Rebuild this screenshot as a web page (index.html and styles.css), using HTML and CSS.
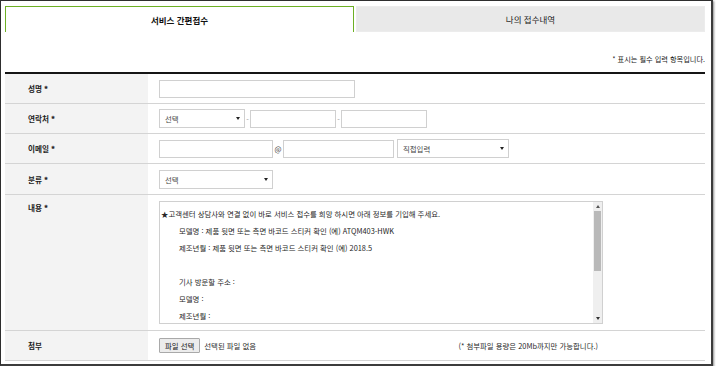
FILE: index.html
```html
<!DOCTYPE html>
<html lang="ko">
<head>
    <meta charset="UTF-8">
    <meta name="viewport" content="width=device-width, initial-scale=1.0">
    <title>서비스 간편접수</title>
    <link rel="stylesheet" href="styles.css">
</head>
<body>
    <div class="frame">
        <div class="wrap">
            <div class="tabs">
                <div class="tab active">서비스 간편접수</div>
                <div class="tab">나의 접수내역</div>
            </div>

            <p class="note">* 표시는 필수 입력 항목입니다.</p>

            <div class="form">
                <div class="row">
                    <div class="label">성명 <b>*</b></div>
                    <div class="field">
                        <input class="input w-name" type="text">
                    </div>
                </div>

                <div class="row">
                    <div class="label">연락처 <b>*</b></div>
                    <div class="field">
                        <div class="select w-tel">선택<span class="arrow"></span></div>
                        <span class="sep">-</span>
                        <input class="input w-tel" type="text">
                        <span class="sep">-</span>
                        <input class="input w-tel" type="text">
                    </div>
                </div>

                <div class="row">
                    <div class="label">이메일 <b>*</b></div>
                    <div class="field">
                        <input class="input w-mail" type="text">
                        <span class="at">@</span>
                        <input class="input w-domain" type="text">
                        <div class="select w-direct">직접입력<span class="arrow"></span></div>
                    </div>
                </div>

                <div class="row">
                    <div class="label">분류 <b>*</b></div>
                    <div class="field">
                        <div class="select w-mail">선택<span class="arrow"></span></div>
                    </div>
                </div>

                <div class="row tall">
                    <div class="label">내용 <b>*</b></div>
                    <div class="field">
                        <div class="memo">
                            <div class="memo-text">
                                <div>★고객센터 상담사와 연결 없이 바로 서비스 접수를 희망 하시면 아래 정보를 기입해 주세요.</div>
                                <div class="indent">모델명 : 제품 뒷면 또는 측면 바코드 스티커 확인 (예) ATQM403-HWK</div>
                                <div class="indent">제조년월 : 제품 뒷면 또는 측면 바코드 스티커 확인 (예) 2018.5</div>
                                <div class="indent">&nbsp;</div>
                                <div class="indent">기사 방문할 주소 :</div>
                                <div class="indent">모델명 :</div>
                                <div class="indent">제조년월 :</div>
                            </div>
                            <div class="scrollbar">
                                <span class="scroll-up"></span>
                                <span class="thumb"></span>
                                <span class="track"></span>
                                <span class="scroll-down"></span>
                            </div>
                        </div>
                    </div>
                </div>

                <div class="row">
                    <div class="label">첨부</div>
                    <div class="field">
                        <button class="file-btn" type="button">파일 선택</button>
                        <span class="file-name">선택된 파일 없음</span>
                        <span class="attach-tip">(* 첨부파일 용량은 20Mb까지만 가능합니다.)</span>
                    </div>
                </div>
            </div>
        </div>
    </div>
</body>
</html>
```

FILE: styles.css
```css
body {
    margin: 0;
    padding: 0;
    background: #ffffff;
    font-family: "Noto Sans CJK KR", "Noto Sans", sans-serif;
    font-size: 7.4px;
    color: #2a2a2a;
}

.frame {
    width: 710px;
    height: 363px;
    border-top: 1px solid #2e2e2e;
    border-left: 1px solid #2e2e2e;
    border-right: 2px solid #3c3c3c;
    border-bottom: 2px solid #3c3c3c;
    box-shadow: 1px 1px 2px rgba(0, 0, 0, 0.45);
}

.wrap {
    width: 700px;
    padding: 5px 6px 0 4px;
}

/* tabs */
.tabs {
    display: flex;
    gap: 2px;
    height: 26px;
}

.tab {
    flex: 1;
    display: flex;
    align-items: center;
    justify-content: center;
    font-size: 8.5px;
    color: #222222;
    background: #e9e9e9;
    border: 1px solid #ececec;
    box-sizing: border-box;
}

.tab.active {
    background: #ffffff;
    font-weight: bold;
    color: #111111;
    border: 1px solid #6db024;
    border-bottom: none;
}

.note {
    margin: 0;
    height: 40px;
    padding-top: 20px;
    box-sizing: border-box;
    text-align: right;
    font-size: 7.2px;
    line-height: 14px;
    color: #222222;
}

/* form rows */
.form {
    border-top: 2px solid #151515;
}

.row {
    display: grid;
    grid-template-columns: 143px 1fr;
    height: 29px;
    border-bottom: 1px solid #d4d4d4;
}

.row:nth-child(4) {
    height: 30px;
}

.row.tall {
    height: 135px;
}

.label {
    background: #f3f3f3;
    padding-left: 23px;
    display: flex;
    align-items: center;
    font-weight: bold;
    color: #222222;
    font-size: 7.6px;
}

.label b {
    margin-left: 2px;
}

.row.tall .label {
    align-items: flex-start;
    padding-top: 6px;
    line-height: 14px;
}

.field {
    display: flex;
    align-items: center;
    padding-left: 11px;
}

.input {
    height: 18px;
    margin: 0;
    padding: 0;
    border: 1px solid #d0d0d0;
    box-sizing: border-box;
    background: #ffffff;
}

.select {
    position: relative;
    height: 19px;
    border: 1px solid #d0d0d0;
    box-sizing: border-box;
    background: #ffffff;
    display: flex;
    align-items: center;
    padding-left: 5px;
    color: #444444;
}

.arrow {
    position: absolute;
    right: 4px;
    top: 7px;
    width: 0;
    height: 0;
    border-left: 2px solid transparent;
    border-right: 2px solid transparent;
    border-top: 3px solid #222222;
}

.w-name { width: 196px; }
.w-tel { width: 86px; }
.w-mail { width: 114px; }
.w-domain { width: 111px; }
.w-direct { width: 112px; margin-left: 3px; }

.sep {
    width: 5px;
    text-align: center;
    color: #999999;
}

.at {
    width: 10px;
    text-align: center;
    color: #444444;
}

/* content box */
.memo {
    display: flex;
    width: 444px;
    height: 123px;
    border: 1px solid #d0d0d0;
    box-sizing: border-box;
}

.memo-text {
    flex: 1;
    overflow: hidden;
    padding: 3px 0 0 1px;
    line-height: 17px;
    color: #262626;
    white-space: nowrap;
}

.indent {
    padding-left: 18px;
}

.scrollbar {
    width: 9px;
    display: flex;
    flex-direction: column;
    align-items: center;
    background: #efefef;
}

.scroll-up,
.scroll-down {
    width: 0;
    height: 0;
    margin: 3px 0;
    border-left: 2px solid transparent;
    border-right: 2px solid transparent;
}

.scroll-up {
    border-bottom: 3px solid #555555;
}

.scroll-down {
    border-top: 3px solid #333333;
}

.thumb {
    width: 7px;
    height: 60px;
    background: #b9b9b9;
}

.track {
    flex: 1;
}

/* attachment */
.file-btn {
    height: 15px;
    margin: 0;
    padding: 0 5px;
    font-family: inherit;
    font-size: 7.4px;
    color: #111111;
    background: #ececec;
    border: 1px solid #a9a9a9;
    border-radius: 1px;
}

.file-name {
    margin-left: 4px;
}

.attach-tip {
    margin-left: auto;
    margin-right: 107px;
}
```
